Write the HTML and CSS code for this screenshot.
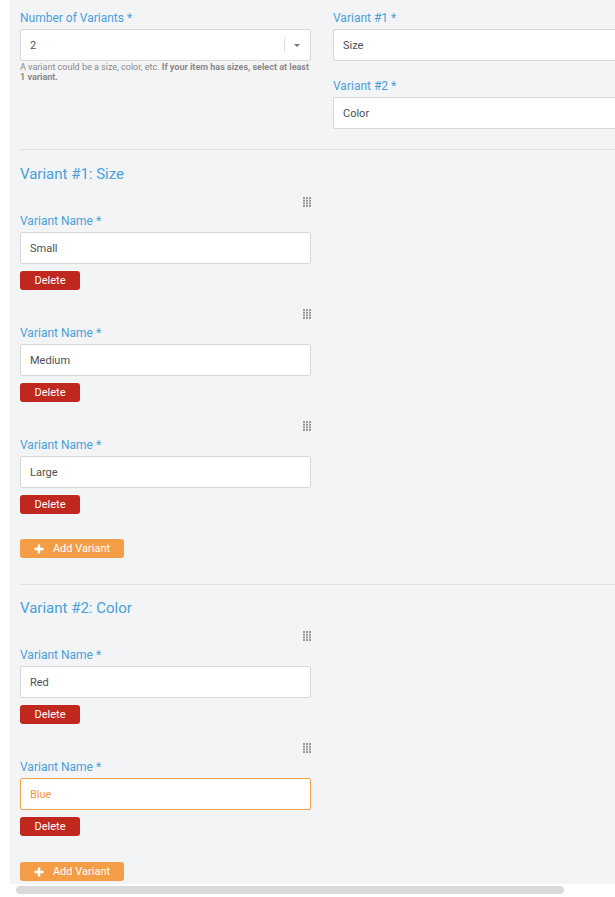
FILE: index.html
```html
<!DOCTYPE html>
<html>
<head>
<meta charset="utf-8">
<link rel="stylesheet" href="styles.css">
</head>
<body>
<div class="panel">
  <div class="top-grid">
    <div class="col">
      <label class="lbl">Number of Variants *</label>
      <div class="input select">
        <span class="val">2</span>
        <span class="sel-sep"></span>
        <span class="sel-arrow"></span>
      </div>
      <p class="help">A variant could be a size, color, etc. <b>If your item has sizes, select at least 1 variant.</b></p>
    </div>
    <div class="col col-right">
      <label class="lbl">Variant #1 *</label>
      <div class="input wide"><span class="val">Size</span></div>
      <label class="lbl lbl-gap">Variant #2 *</label>
      <div class="input wide"><span class="val">Color</span></div>
    </div>
  </div>

  <hr class="divider first">
  <h2 class="section-title">Variant #1: Size</h2>
  <div class="items">
    <div class="item">
      <div class="handle-row"><svg class="handle" width="8" height="10" viewBox="0 0 8 10"><g fill="#9a9a9a"><rect x="0" y="0" width="2" height="2"/><rect x="3" y="0" width="2" height="2"/><rect x="6" y="0" width="2" height="2"/><rect x="0" y="2.7" width="2" height="2"/><rect x="3" y="2.7" width="2" height="2"/><rect x="6" y="2.7" width="2" height="2"/><rect x="0" y="5.4" width="2" height="2"/><rect x="3" y="5.4" width="2" height="2"/><rect x="6" y="5.4" width="2" height="2"/><rect x="0" y="8" width="2" height="2"/><rect x="3" y="8" width="2" height="2"/><rect x="6" y="8" width="2" height="2"/></g></svg></div>
      <label class="lbl">Variant Name *</label>
      <div class="input"><span class="val">Small</span></div>
      <button class="btn btn-delete">Delete</button>
    </div>
    <div class="item">
      <div class="handle-row"><svg class="handle" width="8" height="10" viewBox="0 0 8 10"><g fill="#9a9a9a"><rect x="0" y="0" width="2" height="2"/><rect x="3" y="0" width="2" height="2"/><rect x="6" y="0" width="2" height="2"/><rect x="0" y="2.7" width="2" height="2"/><rect x="3" y="2.7" width="2" height="2"/><rect x="6" y="2.7" width="2" height="2"/><rect x="0" y="5.4" width="2" height="2"/><rect x="3" y="5.4" width="2" height="2"/><rect x="6" y="5.4" width="2" height="2"/><rect x="0" y="8" width="2" height="2"/><rect x="3" y="8" width="2" height="2"/><rect x="6" y="8" width="2" height="2"/></g></svg></div>
      <label class="lbl">Variant Name *</label>
      <div class="input"><span class="val">Medium</span></div>
      <button class="btn btn-delete">Delete</button>
    </div>
    <div class="item">
      <div class="handle-row"><svg class="handle" width="8" height="10" viewBox="0 0 8 10"><g fill="#9a9a9a"><rect x="0" y="0" width="2" height="2"/><rect x="3" y="0" width="2" height="2"/><rect x="6" y="0" width="2" height="2"/><rect x="0" y="2.7" width="2" height="2"/><rect x="3" y="2.7" width="2" height="2"/><rect x="6" y="2.7" width="2" height="2"/><rect x="0" y="5.4" width="2" height="2"/><rect x="3" y="5.4" width="2" height="2"/><rect x="6" y="5.4" width="2" height="2"/><rect x="0" y="8" width="2" height="2"/><rect x="3" y="8" width="2" height="2"/><rect x="6" y="8" width="2" height="2"/></g></svg></div>
      <label class="lbl">Variant Name *</label>
      <div class="input"><span class="val">Large</span></div>
      <button class="btn btn-delete">Delete</button>
    </div>
  </div>
  <button class="btn btn-add"><svg class="plus" width="10" height="10" viewBox="0 0 10 10"><path d="M5 0.5v9M0.5 5h9" stroke="#fff" stroke-width="2.4"/></svg>Add Variant</button>

  <hr class="divider second">
  <h2 class="section-title">Variant #2: Color</h2>
  <div class="items">
    <div class="item">
      <div class="handle-row"><svg class="handle" width="8" height="10" viewBox="0 0 8 10"><g fill="#9a9a9a"><rect x="0" y="0" width="2" height="2"/><rect x="3" y="0" width="2" height="2"/><rect x="6" y="0" width="2" height="2"/><rect x="0" y="2.7" width="2" height="2"/><rect x="3" y="2.7" width="2" height="2"/><rect x="6" y="2.7" width="2" height="2"/><rect x="0" y="5.4" width="2" height="2"/><rect x="3" y="5.4" width="2" height="2"/><rect x="6" y="5.4" width="2" height="2"/><rect x="0" y="8" width="2" height="2"/><rect x="3" y="8" width="2" height="2"/><rect x="6" y="8" width="2" height="2"/></g></svg></div>
      <label class="lbl">Variant Name *</label>
      <div class="input"><span class="val">Red</span></div>
      <button class="btn btn-delete">Delete</button>
    </div>
    <div class="item">
      <div class="handle-row"><svg class="handle" width="8" height="10" viewBox="0 0 8 10"><g fill="#9a9a9a"><rect x="0" y="0" width="2" height="2"/><rect x="3" y="0" width="2" height="2"/><rect x="6" y="0" width="2" height="2"/><rect x="0" y="2.7" width="2" height="2"/><rect x="3" y="2.7" width="2" height="2"/><rect x="6" y="2.7" width="2" height="2"/><rect x="0" y="5.4" width="2" height="2"/><rect x="3" y="5.4" width="2" height="2"/><rect x="6" y="5.4" width="2" height="2"/><rect x="0" y="8" width="2" height="2"/><rect x="3" y="8" width="2" height="2"/><rect x="6" y="8" width="2" height="2"/></g></svg></div>
      <label class="lbl">Variant Name *</label>
      <div class="input focused"><span class="val">Blue</span></div>
      <button class="btn btn-delete">Delete</button>
    </div>
  </div>
  <button class="btn btn-add add-last"><svg class="plus" width="10" height="10" viewBox="0 0 10 10"><path d="M5 0.5v9M0.5 5h9" stroke="#fff" stroke-width="2.4"/></svg>Add Variant</button>
</div>
<div class="scroll-track"><div class="scroll-thumb"></div></div>
</body>
</html>
```

FILE: styles.css
```css
html, body {
  margin: 0;
  padding: 0;
  background: #ffffff;
  overflow: hidden;
  font-family: Roboto, "Liberation Sans", Arial, sans-serif;
}

.panel {
  margin-left: 10px;
  width: 605px;
  overflow: hidden;
  background: #f3f4f6;
  padding: 11px 0 3px 10px;
  box-sizing: border-box;
}

.top-grid {
  display: grid;
  grid-template-columns: 291px 1fr;
  column-gap: 22px;
  align-items: start;
}

.col {
  display: flex;
  flex-direction: column;
  min-width: 0;
}

.col-right {
  overflow: hidden;
}

.lbl {
  display: block;
  font-size: 12px;
  line-height: 14px;
  color: #4aa0da;
  margin-bottom: 4px;
}

.lbl-gap {
  margin-top: 18px;
}

.input {
  box-sizing: border-box;
  width: 291px;
  height: 32px;
  background: #ffffff;
  border: 1px solid #d8d8d8;
  border-radius: 2px;
  display: flex;
  align-items: center;
  padding-left: 9px;
  flex-shrink: 0;
}

.input.wide {
  width: 300px;
  border-right: 0;
}

.input.focused {
  border-color: #f3a04f;
}

.input.focused .val {
  color: #f0983f;
}

.val {
  font-size: 11px;
  color: #505050;
}

.select {
  position: relative;
}

.sel-sep {
  position: absolute;
  left: 263px;
  top: 7px;
  width: 1px;
  height: 16px;
  background: #e0e0e0;
}

.sel-arrow {
  position: absolute;
  left: 273px;
  top: 14px;
  width: 0;
  height: 0;
  border-left: 3px solid transparent;
  border-right: 3px solid transparent;
  border-top: 3px solid #777777;
}

.help {
  margin: 1px 0 0 0;
  font-size: 9px;
  line-height: 10px;
  color: #8a8a8a;
  width: 291px;
}

.help b {
  font-weight: 700;
}

.divider {
  border: 0;
  height: 1px;
  background: #dfe0e2;
  margin: 0;
}

.divider.first {
  margin-top: 20px;
}

.divider.second {
  margin-top: 26px;
}

.section-title {
  margin: 15px 0 0 0;
  font-size: 15px;
  line-height: 18px;
  font-weight: 400;
  color: #4aa0da;
}

.divider.second + .section-title {
  margin-top: 14px;
}

.items {
  display: flex;
  flex-direction: column;
  gap: 18px;
  margin-top: 13px;
  width: 291px;
}

.item {
  display: flex;
  flex-direction: column;
}

.handle-row {
  height: 12px;
  display: flex;
  justify-content: flex-end;
  align-items: center;
  margin-bottom: 6px;
}

.btn {
  border: 0;
  border-radius: 3px;
  color: #ffffff;
  font-family: Roboto, "Liberation Sans", Arial, sans-serif;
  font-size: 11px;
  height: 19px;
  padding: 0;
  display: inline-flex;
  align-items: center;
  justify-content: center;
}

.btn-delete {
  margin-top: 7px;
  width: 60px;
  background: #c0271d;
}

.btn-add {
  margin-top: 25px;
  width: 104px;
  background: #f39d46;
  gap: 9px;
}

.add-last {
  margin-top: 26px;
}

.plus {
  display: block;
}

.scroll-track {
  height: 12px;
  display: flex;
  align-items: center;
}

.scroll-thumb {
  margin-left: 16px;
  width: 548px;
  height: 8px;
  border-radius: 4px;
  background: #dadadd;
}
```
